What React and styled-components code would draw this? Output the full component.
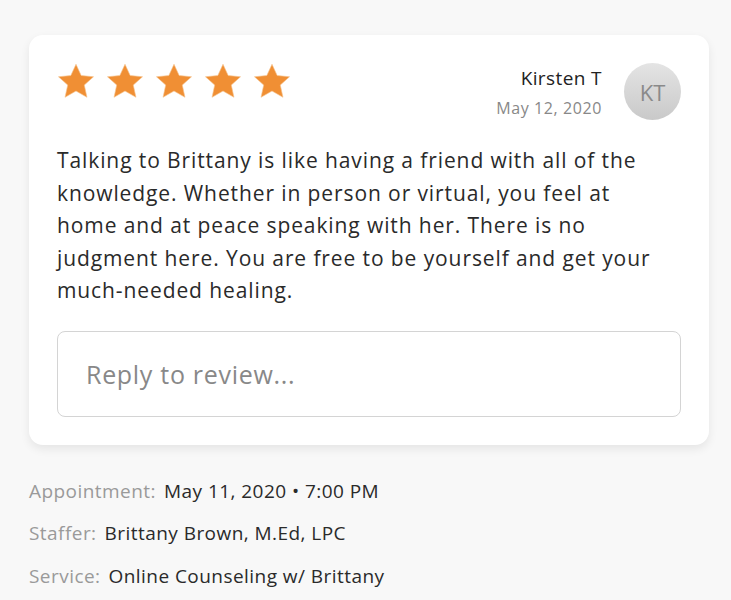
import React from 'react';
import styled, { createGlobalStyle } from 'styled-components';

const GlobalStyle = createGlobalStyle`
  * { box-sizing: border-box; }
  body {
    margin: 0;
    background: #f8f8f8;
    font-family: "Open Sans", "Lato", sans-serif;
  }
`;

const Page = styled.div`
  padding: 35px 22px 0 29px;
`;

const Card = styled.div`
  background: #fff;
  border-radius: 14px;
  box-shadow: 0 4px 10px rgba(0, 0, 0, 0.08);
  padding: 28px 28px 28px 28px;
`;

const Header = styled.div`
  display: flex;
  align-items: flex-start;
  justify-content: space-between;
`;

const Stars = styled.div`
  display: flex;
  gap: 11px;
  padding-top: 0;
`;

const Reviewer = styled.div`
  display: flex;
  align-items: center;
  gap: 22px;
`;

const Who = styled.div`
  text-align: right;
`;

const Name = styled.div`
  font-size: 19px;
  letter-spacing: 0.4px;
  color: #222;
  line-height: 24px;
`;

const DateText = styled.div`
  font-size: 16px;
  letter-spacing: 0.6px;
  color: #888;
  margin-top: 8px;
  line-height: 20px;
`;

const Avatar = styled.div`
  width: 57px;
  height: 57px;
  border-radius: 50%;
  background: linear-gradient(180deg, #e4e4e4 0%, #c9c9c9 100%);
  color: #8a8a8a;
  font-size: 22px;
  display: flex;
  align-items: center;
  justify-content: center;
`;

const Body = styled.p`
  margin: 24px 0 0;
  padding-right: 10px;
  font-size: 21px;
  letter-spacing: 0.9px;
  line-height: 32.5px;
  color: #2a2a2a;
`;

const ReplyBox = styled.div`
  margin-top: 24px;
  height: 86px;
  border: 1.5px solid #d4d4d4;
  border-radius: 8px;
  display: flex;
  align-items: center;
  padding-left: 28px;
  font-size: 25px;
  letter-spacing: 0.7px;
  color: #888;
`;

const Meta = styled.div`
  margin-top: 34px;
  display: flex;
  flex-direction: column;
  gap: 18.5px;
`;

const MetaRow = styled.div`
  font-size: 19px;
  letter-spacing: 0.45px;
  line-height: 24px;
  color: #2a2a2a;
`;

const Label = styled.span`
  color: #9a9a9a;
  margin-right: 8px;
`;

const Star = () => (
  <svg width="38" height="36" viewBox="0 0 24 23">
    <path
      d="M12 0.8l3.3 7.2 7.9 0.8-5.9 5.3 1.7 7.8L12 17.9l-7 4 1.7-7.8L0.8 8.8l7.9-0.8z"
      fill="#f08f34"
      stroke="#f5c48f"
      strokeWidth="0.4"
    />
  </svg>
);

export default function App() {
  return (
    <Page>
      <GlobalStyle />
      <Card>
        <Header>
          <Stars>
            {[0, 1, 2, 3, 4].map((i) => <Star key={i} />)}
          </Stars>
          <Reviewer>
            <Who>
              <Name>Kirsten T</Name>
              <DateText>May 12, 2020</DateText>
            </Who>
            <Avatar>KT</Avatar>
          </Reviewer>
        </Header>
        <Body>
          Talking to Brittany is like having a friend with all of the knowledge. Whether in person or virtual, you feel at home and at peace speaking with her. There is no judgment here. You are free to be yourself and get your much-needed healing.
        </Body>
        <ReplyBox>Reply to review...</ReplyBox>
      </Card>
      <Meta>
        <MetaRow><Label>Appointment:</Label>May 11, 2020 • 7:00 PM</MetaRow>
        <MetaRow><Label>Staffer:</Label>Brittany Brown, M.Ed, LPC</MetaRow>
        <MetaRow><Label>Service:</Label>Online Counseling w/ Brittany</MetaRow>
      </Meta>
    </Page>
  );
}
